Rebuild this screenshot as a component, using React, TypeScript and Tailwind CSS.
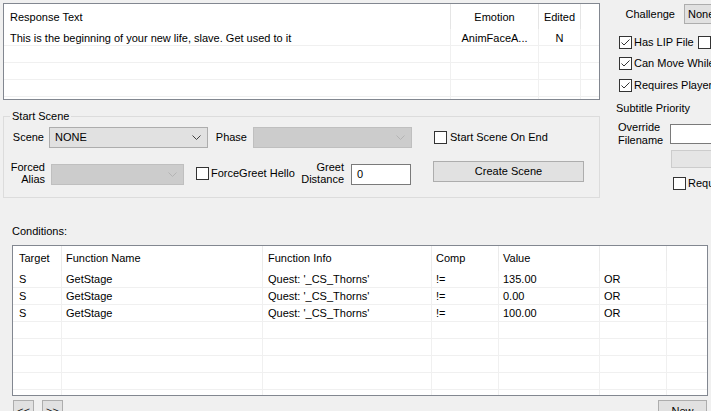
import React from 'react';

const Chevron = ({ disabled }: { disabled?: boolean }) => (
  <svg width="9" height="5" viewBox="0 0 9 5" className="shrink-0">
    <polyline points="0.5,0.5 4.5,4.5 8.5,0.5" fill="none" stroke={disabled ? '#b4b4b4' : '#404040'} strokeWidth="1" />
  </svg>
);

const Check = ({ checked }: { checked?: boolean }) => (
  <span className="w-[13px] h-[13px] border border-[#333333] bg-white flex items-center justify-center shrink-0">
    {checked && (
      <svg width="9" height="7" viewBox="0 0 9 7">
        <polyline points="0.5,3.5 3,6 8.5,0.5" fill="none" stroke="#333333" strokeWidth="1" />
      </svg>
    )}
  </span>
);

const Combo = ({ value, disabled, className }: { value?: string; disabled?: boolean; className: string }) => (
  <div
    className={
      disabled
        ? `h-[21px] border border-[#bfbfbf] bg-[#cccccc] flex items-center justify-between pl-[4px] pr-[6px] ${className}`
        : `h-[21px] border border-[#adadad] bg-[#e1e1e1] flex items-center justify-between pl-[5px] pr-[6px] ${className}`
    }
  >
    <span>{value}</span>
    <Chevron disabled={disabled} />
  </div>
);

const respCols = [
  { w: 'w-[447px]', head: 'Response Text', cell: 'This is the beginning of your new life, slave. Get used to it', align: 'pl-[6px]' },
  { w: 'w-[88px]', head: 'Emotion', cell: 'AnimFaceA...', align: 'justify-center' },
  { w: 'w-[42px]', head: 'Edited', cell: 'N', align: 'justify-center' },
  { w: 'w-[18px]', head: '', cell: '', align: '' },
];

const condCols = [
  { w: 'w-[49px]', head: 'Target', pad: 'pl-[6px]' },
  { w: 'w-[201px]', head: 'Function Name', pad: 'pl-[4px]' },
  { w: 'w-[169px]', head: 'Function Info', pad: 'pl-[5px]' },
  { w: 'w-[67px]', head: 'Comp', pad: 'pl-[4px]' },
  { w: 'w-[101px]', head: 'Value', pad: 'pl-[4px]' },
  { w: 'w-[67px]', head: '', pad: 'pl-[4px]' },
  { w: 'w-[40px]', head: '', pad: '' },
];

const conditions = [
  ['S', 'GetStage', "Quest: '_CS_Thorns'", '!=', '135.00', 'OR', ''],
  ['S', 'GetStage', "Quest: '_CS_Thorns'", '!=', '0.00', 'OR', ''],
  ['S', 'GetStage', "Quest: '_CS_Thorns'", '!=', '100.00', 'OR', ''],
  ['', '', '', '', '', '', ''],
  ['', '', '', '', '', '', ''],
  ['', '', '', '', '', '', ''],
  ['', '', '', '', '', '', ''],
  ['', '', '', '', '', '', ''],
];

export default function App() {
  return (
    <div className="w-[711px] h-[411px] overflow-hidden bg-[#f0f0f0] text-[11px] leading-[13px] text-black font-['Liberation_Sans',Arial,sans-serif]">
      <div className="flex">
        {/* Left column */}
        <div className="w-[600px] shrink-0 pl-[3px] pt-[3px]">
          {/* Response list */}
          <div className="w-[597px] h-[97px] border border-[#828790] bg-white overflow-hidden">
            <div className="flex h-[25px]">
              {respCols.map((c, i) => (
                <div key={i} className={`${c.w} h-full flex items-center pt-[2px] ${c.align} ${i < 3 ? 'border-r border-[#e5e5e5]' : ''}`}>
                  {c.head}
                </div>
              ))}
            </div>
            {[0, 1, 2, 3, 4].map((r) => (
              <div key={r} className="flex h-[17px] border-b border-[#f0f0f0]">
                {respCols.map((c, i) => (
                  <div key={i} className={`${c.w} h-full flex items-center pt-[2px] ${c.align} ${i < 3 ? 'border-r border-[#f0f0f0]' : ''}`}>
                    {r === 0 ? c.cell : ''}
                  </div>
                ))}
              </div>
            ))}
          </div>

          {/* Start Scene group */}
          <fieldset className="mt-[10px] w-[597px] border border-[#dcdcdc] pb-[12px]">
            <legend className="ml-[6px] px-[2px] leading-[13px]">Start Scene</legend>
            <div className="flex items-center h-[21px] mt-[4px]">
              <span className="w-[40px] text-right">Scene</span>
              <Combo value="NONE" className="ml-[5px] w-[159px]" />
              <span className="w-[39px] text-right">Phase</span>
              <Combo disabled className="ml-[6px] w-[159px]" />
              <div className="ml-[22px] flex items-center">
                <Check />
                <span className="ml-[3px]">Start Scene On End</span>
              </div>
            </div>
            <div className="flex items-center h-[24px] mt-[13px]">
              <span className="w-[41px] text-right leading-[12px]">
                Forced
                <br />
                Alias
              </span>
              <Combo disabled className="ml-[6px] w-[133px] mt-[2px]" />
              <div className="ml-[12px] w-[104px] flex items-center mt-[1px]">
                <Check />
                <span className="ml-[2px]">ForceGreet Hello</span>
              </div>
              <span className="w-[44px] text-right leading-[12px]">
                Greet
                <br />
                Distance
              </span>
              <div className="ml-[7px] w-[60px] h-[21px] mt-[2px] border border-[#7a7a7a] bg-white flex items-center pl-[5px]">0</div>
              <div className="ml-[22px] self-start w-[151px] h-[21px] border border-[#adadad] bg-[#e1e1e1] flex items-center justify-center">
                Create Scene
              </div>
            </div>
          </fieldset>
        </div>

        {/* Right column */}
        <div className="ml-[16px] w-[200px] shrink-0 pt-[4px]">
          <div className="flex items-center h-[21px]">
            <span className="w-[59px] text-right">Challenge</span>
            <div className="ml-[9px] w-[60px] h-[20px] -mt-[1px] border border-[#adadad] bg-[#e1e1e1] flex items-center pl-[3px]">None</div>
          </div>
          <div className="mt-[10px] ml-[3px] flex items-center h-[15px]">
            <Check checked />
            <span className="ml-[2px]">Has LIP File</span>
            <span className="ml-[4px]">
              <Check />
            </span>
          </div>
          <div className="mt-[6px] ml-[3px] flex items-center h-[15px]">
            <Check checked />
            <span className="ml-[2px]">Can Move While</span>
          </div>
          <div className="mt-[7px] ml-[3px] flex items-center h-[15px]">
            <Check checked />
            <span className="ml-[2px]">Requires Player</span>
          </div>
          <div className="mt-[9px]">Subtitle Priority</div>
          <div className="mt-[6px] flex items-center">
            <span className="ml-[2px] w-[52px] leading-[13px]">
              Override
              <br />
              Filename
            </span>
            <div className="w-[80px] h-[20px] border border-[#7a7a7a] bg-white" />
          </div>
          <div className="ml-[55px] mt-[3px] w-[80px] h-[18px] border border-[#cccccc] bg-[#e5e5e5]" />
          <div className="ml-[57px] mt-[9px] flex items-center">
            <Check />
            <span className="ml-[2px]">Requires</span>
          </div>
        </div>
      </div>

      {/* Conditions */}
      <div className="mt-[27px] ml-[12px]">Conditions:</div>
      <div className="mt-[7px] ml-[12px] w-[696px] h-[151px] border border-[#828790] bg-white overflow-hidden">
        <div className="flex h-[25px]">
          {condCols.map((c, i) => (
            <div key={i} className={`${c.w} h-full flex items-center ${c.pad} ${i < 6 ? 'border-r border-[#ebebeb]' : ''}`}>
              {c.head}
            </div>
          ))}
        </div>
        {conditions.map((row, r) => (
          <div key={r} className="flex h-[17px] border-b border-[#f0f0f0]">
            {condCols.map((c, i) => (
              <div key={i} className={`${c.w} h-full flex items-center ${c.pad} ${i < 6 ? 'border-r border-[#f0f0f0]' : ''}`}>
                {row[i]}
              </div>
            ))}
          </div>
        ))}
      </div>

      <div className="mt-[4px] ml-[13px] w-[694px] flex justify-between">
        <div className="flex">
          <div className="w-[21px] h-[22px] border border-[#adadad] bg-[#e1e1e1] flex items-center justify-center">&lt;&lt;</div>
          <div className="ml-[8px] w-[21px] h-[22px] border border-[#adadad] bg-[#e1e1e1] flex items-center justify-center">&gt;&gt;</div>
        </div>
        <div className="w-[49px] h-[22px] border border-[#adadad] bg-[#e1e1e1] flex items-center justify-center">New</div>
      </div>
    </div>
  );
}
